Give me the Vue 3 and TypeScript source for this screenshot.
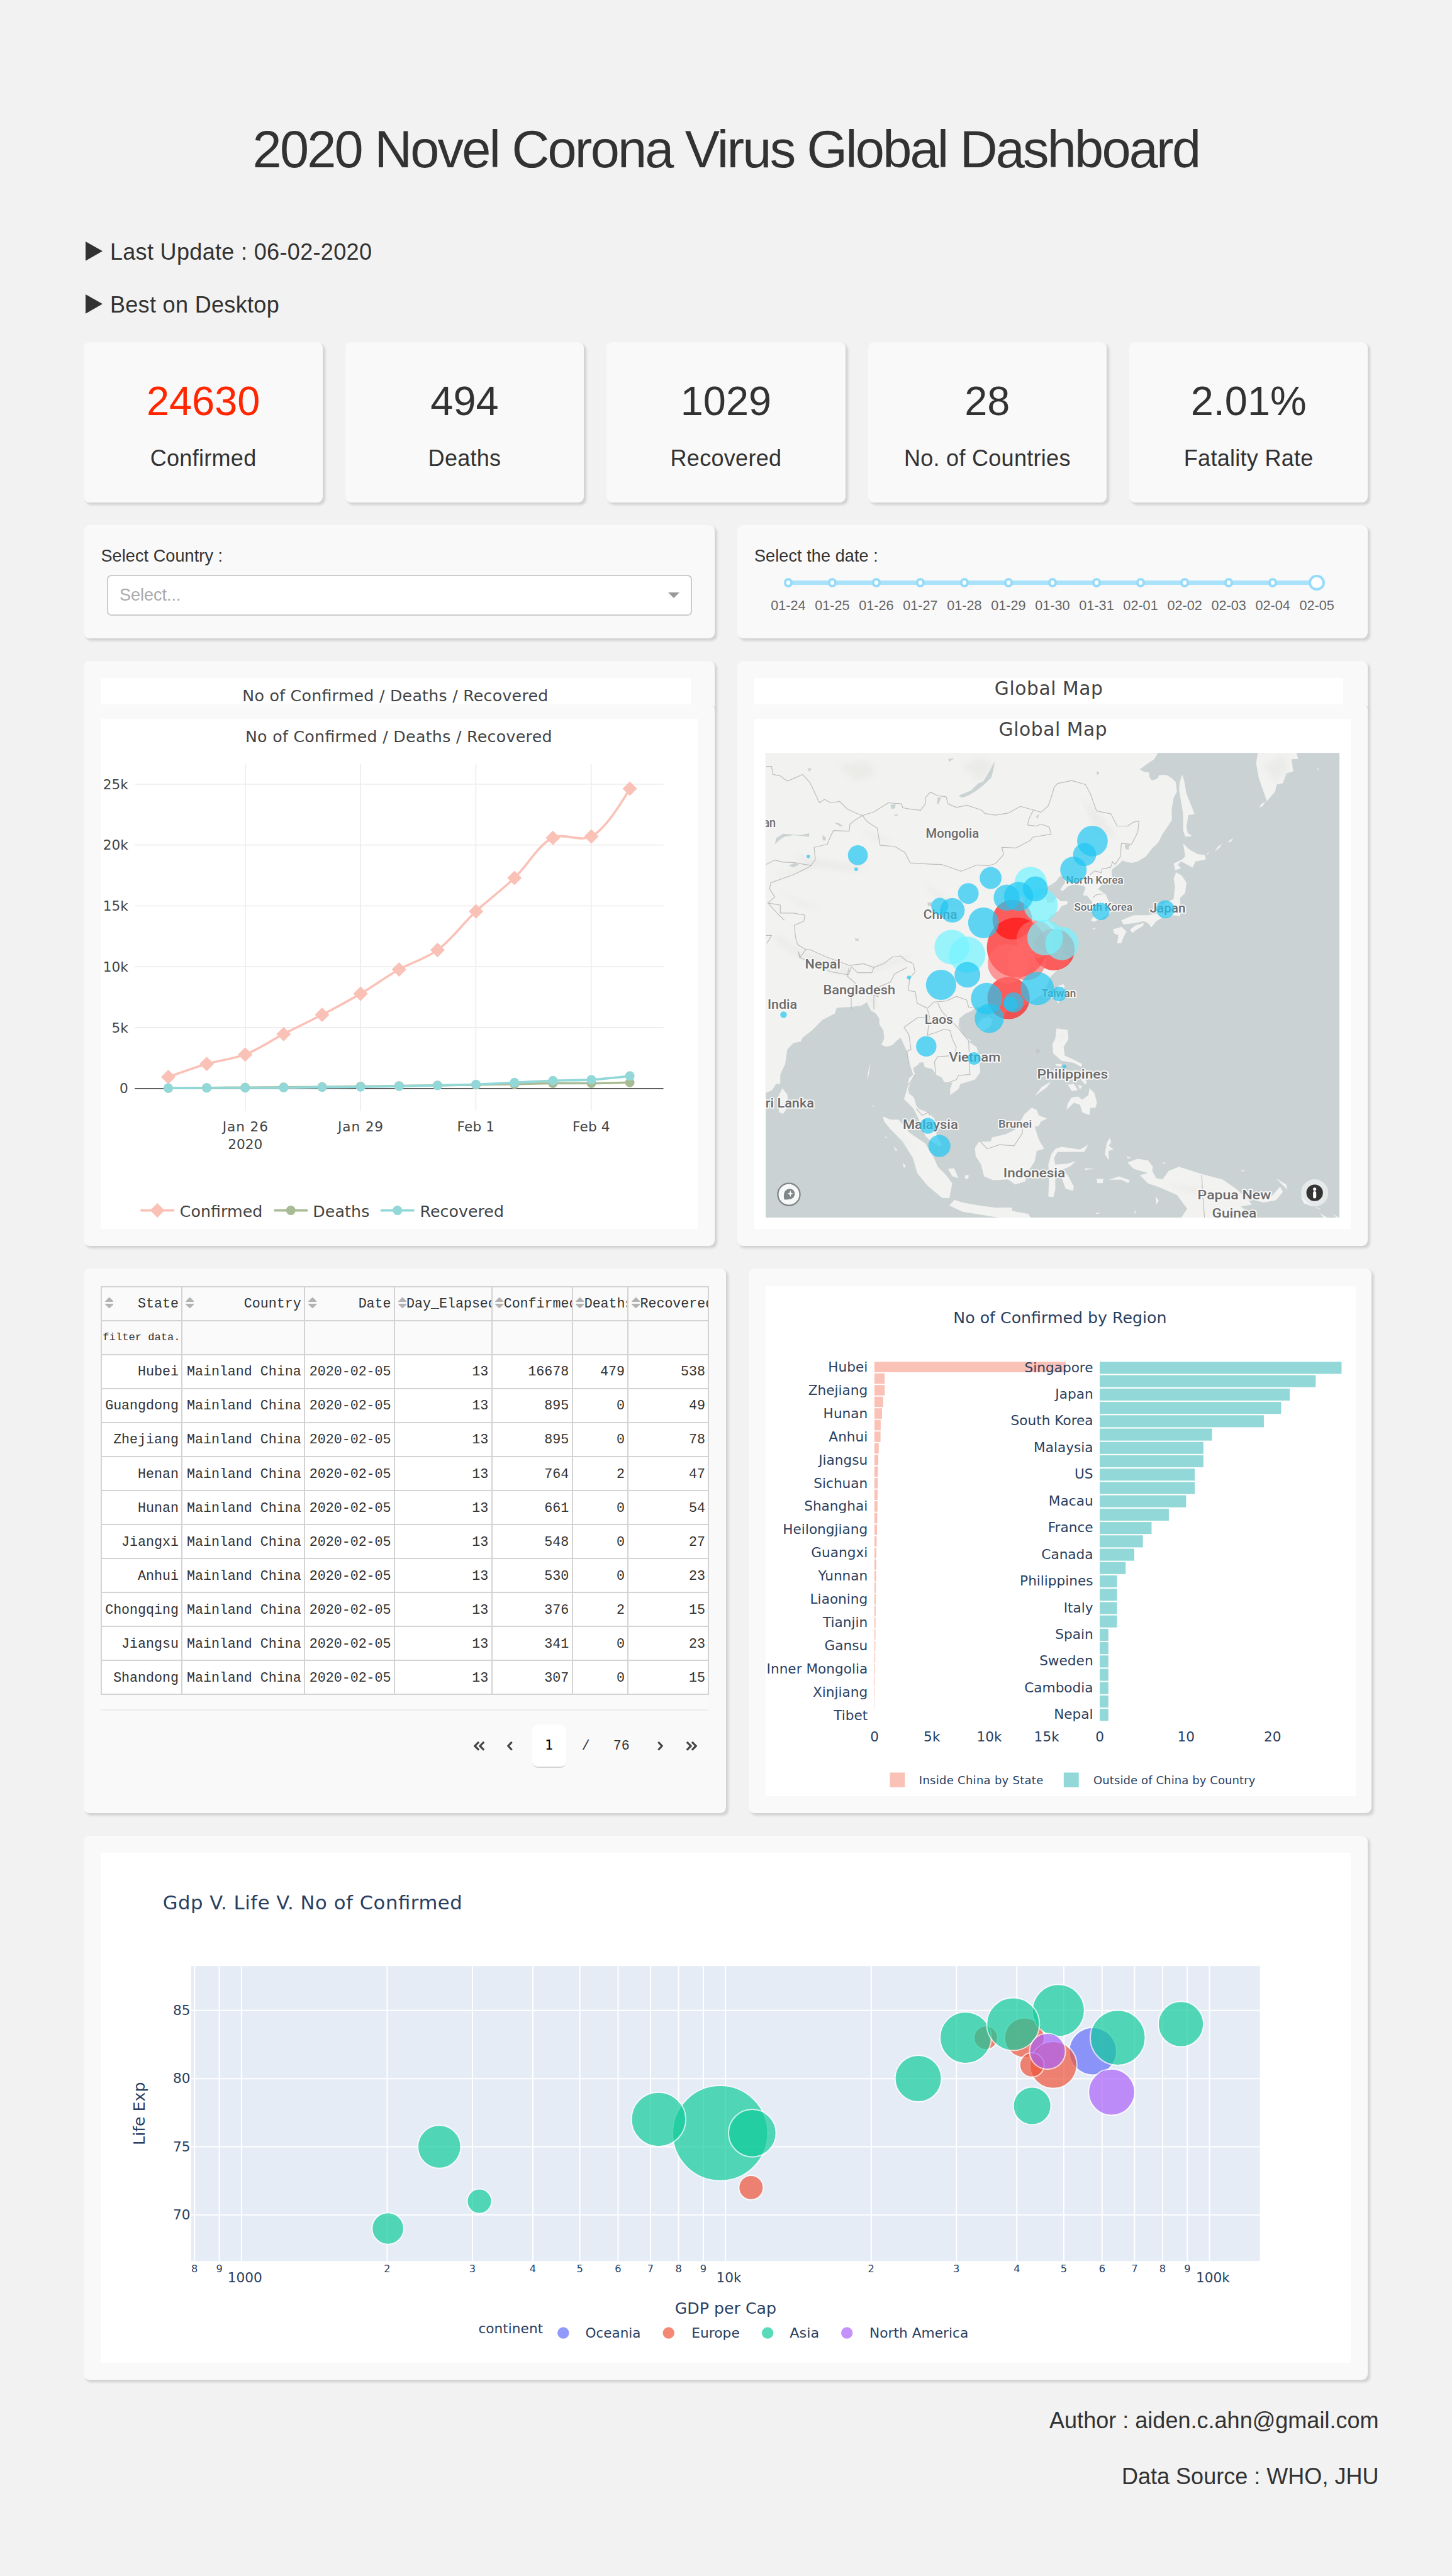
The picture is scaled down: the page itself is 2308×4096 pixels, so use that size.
<script setup lang="ts">
type Pt = [number, number]
interface Label { t: string; x: number; y: number; w: number; s?: number; a?: string }

const stats = [
  { value: '24630', label: 'Confirmed', alert: true },
  { value: '494', label: 'Deaths' },
  { value: '1029', label: 'Recovered' },
  { value: '28', label: 'No. of Countries' },
  { value: '2.01%', label: 'Fatality Rate' },
]
const dates = ['01-24', '01-25', '01-26', '01-27', '01-28', '01-29', '01-30', '01-31', '02-01', '02-02', '02-03', '02-04', '02-05']

/* ---- time series ---- */
const dayX = (i: number) => 297.2 + i * 67.82
const countY = (v: number) => 1920 - (v / 5000) * 107.36
const toPts = (v: number[]): Pt[] => v.map((n, i) => [dayX(i), countY(n)])

function tangents(p: Pt, c: Pt, n: Pt): [Pt, Pt] {
  const ax = p[0] - c[0], ay = p[1] - c[1], bx = n[0] - c[0], by = n[1] - c[1]
  const da = Math.pow(ax * ax + ay * ay, 0.25), db = Math.pow(bx * bx + by * by, 0.25)
  const nx = db * db * ax - da * da * bx, ny = db * db * ay - da * da * by
  const d1 = 3 * db * (da + db), d2 = 3 * da * (da + db)
  return [[c[0] + nx / d1, c[1] + ny / d1], [c[0] - nx / d2, c[1] - ny / d2]]
}
function spline(pts: Pt[]): string {
  const tg: [Pt, Pt][] = []
  for (let i = 1; i < pts.length - 1; i++) tg.push(tangents(pts[i - 1], pts[i], pts[i + 1]))
  let d = `M${pts[0]}Q${tg[0][0]} ${pts[1]}`
  for (let i = 2; i < pts.length - 1; i++) d += `C${tg[i - 2][1]} ${tg[i - 1][0]} ${pts[i]}`
  return d + `Q${tg[tg.length - 1][1]} ${pts[pts.length - 1]}`
}
const confirmed = toPts([941, 2019, 2794, 4473, 6057, 7783, 9776, 11374, 14549, 17295, 20588, 20704, 24630])
const deaths = toPts([26, 56, 80, 107, 132, 170, 213, 259, 305, 361, 425, 427, 494])
const recovered = toPts([36, 49, 54, 63, 110, 133, 187, 252, 340, 487, 644, 720, 1029])
const kTicks = [0, 1, 2, 3, 4, 5].map(i => ({ y: 1920 - i * 107.36, t: i ? `${i * 5}k` : '0' }))
const dayTicks = [{ x: 433, t: 'Jan 26', w: 80 }, { x: 636.2, t: 'Jan 29', w: 80 }, { x: 839.5, t: 'Feb 1', w: 66 }, { x: 1043, t: 'Feb 4', w: 66 }]
const diamond = (x: number, y: number) => `M${x - 12.8},${y}L${x},${y - 12.8}L${x + 12.8},${y}L${x},${y + 12.8}Z`

/* ---- map: outlines are traced on three sheets, each with its own origin and scale ---- */
type Sheet = 'n' | 's' | 'c'
const sheets: Record<Sheet, [number, number, number, number]> = {
  n: [1290, 1150, 0.72704, 0.357143],
  s: [1290, 1640, 0.72704, 0.3699],
  c: [1640, 1500, 1 / 3, 1 / 3],
}
function at(s: Sheet, x: number, y: number): Pt {
  const [ox, oy, kx, ky] = sheets[s]
  return [+(ox + x * kx).toFixed(1), +(oy + y * ky).toFixed(1)]
}
function trace(...parts: string[]): string {
  const out: string[] = []
  for (const part of parts) {
    const s = part[0] as Sheet
    for (const p of part.slice(2).trim().split(/\s+/)) {
      const [x, y] = p.split(',').map(Number)
      out.push(at(s, x, y).join(','))
    }
  }
  return out.join(' ')
}
const lands = [
  trace(
    'n:83,498 1034,498 1025,530 1010,550 990,580 1000,592 1012,595 1014,622 1020,635 1033,625 1037,608 1055,608 1068,625 1077,642 1080,690 1072,720 1067,780 1068,830 1055,870 1045,900 1035,940 1018,975 1005,1010 985,1035 970,1042 958,1038 948,1030 938,1050 922,1075 922,1110',
    'c:960,140 920,170 888,205 905,215 930,235 953,290 955,330 920,352 870,377 850,372 868,345 860,310 856,270 830,240 808,238 822,200 815,188 760,180 730,190 705,212 688,212 692,200 715,170 708,138 685,138 665,165 635,185 615,195 612,215 605,235 620,278 650,275 668,250 690,268 728,270 725,285 695,295 680,320 640,345 622,370 650,395 665,420 690,440 700,480 715,510 700,540 735,560 738,590 700,625 665,640 640,665 625,700 600,760 540,795 480,830 430,840 400,855 390,880 375,870 370,850 300,835 245,830 220,850 185,865 155,890 150,930 180,980 220,1010',
    's:572,530 594,560 600,600 603,680 590,715 555,735 550,760 530,788 530,760 535,730 515,725 510,705 495,690 487,665 468,655 465,632 453,635 455,640 440,660 445,690 438,720 428,755 430,780 442,800 448,840 455,855 475,870 492,900 495,950 498,990 510,1020 505,1035 485,1010 470,985 460,930 448,880 440,850 418,808 424,770 428,740 430,710 440,690 432,640 425,580 410,515 400,530 390,550 375,558 363,548 370,520 368,480 358,450 358,425 350,400 338,385 328,345 315,362 290,368 255,372 250,400 220,430 195,480 172,515 168,533 150,540 135,570 130,640 118,690 118,735 108,735 98,765 83,778',
  ),
  trace('n:1093,606 1098,640 1103,700 1115,760 1123,802 1108,805 1103,860 1106,895 1115,905 1113,912 1100,912 1095,880 1095,800 1090,740 1085,680 1087,640'),
  trace('n:1276,498 1370,498 1374,528 1358,530 1362,590 1345,600 1337,648 1322,655 1318,690 1298,738 1290,690 1278,620 1272,550'),
  trace('n:1280,768 1284,752 1295,738 1288,762'),
  trace('n:1172,985 1180,960 1190,948 1182,970'), trace('n:1152,1000 1158,985 1155,1000'), trace('n:1203,938 1217,918 1210,940'),
  trace('n:1418,568 1426,585 1420,578'),
  trace('n:1095,945 1110,975 1130,998 1148,1003 1150,1025 1125,1035 1118,1065 1090,1035 1082,1050 1090,1068 1076,1078 1072,1045 1092,1025 1100,1010'),
  trace('n:1078,1088 1092,1105 1103,1140 1100,1190 1088,1215 1088,1305 1070,1300 1060,1310 1045,1312 1030,1330 1018,1360 1010,1340 1000,1330 975,1340 950,1345 945,1325 975,1300 1010,1300 1035,1290 1050,1240 1072,1220 1075,1160 1072,1120'),
  trace('n:966,1372 980,1350 1000,1338 998,1352 980,1375 972,1388'),
  trace('n:925,1370 945,1358 958,1380 950,1410 945,1438 935,1438 938,1400 928,1390'),
  trace('n:873,1368 884,1362 880,1370'),
  trace('c:705,708 712,720 700,770 680,810 665,795 665,750 680,715'),
  trace('c:250,920 270,895 310,880 332,895 320,930 285,955 258,945'),
  trace('s:788,470 815,478 817,520 805,560 808,600 825,615 850,640 848,655 830,635 800,625 780,590 778,545 785,520'),
  trace('s:735,793 752,750 775,722 765,750'), trace('s:815,738 830,735 840,765 825,770'),
  trace('s:850,695 862,725 858,738 848,718'), trace('s:840,740 850,745 845,762'), trace('s:785,640 800,640 800,652 788,650'),
  trace('s:815,830 825,800 840,795 850,810 865,790 868,755 880,780 886,825 882,850 870,850 868,885 850,870 845,835 830,825 812,860'),
  trace('s:728,848 740,860 745,885 765,900 750,915 745,935 735,940 745,1000 758,1045 740,1055 735,1105 720,1150 712,1200 688,1215 670,1190 635,1195 612,1175 605,1120 592,1080 590,1040 600,1010 628,1010 632,990 665,975 690,950 710,880'),
  trace('s:367,890 385,905 405,905 430,965 470,1020 490,1085 500,1130 520,1170 535,1210 528,1280 510,1278 475,1220 450,1160 440,1090 415,1010 385,950 370,915'),
  trace('s:525,1140 540,1138 550,1185 535,1175'), trace('s:566,1170 575,1170 574,1187 566,1187'), trace('s:415,1110 422,1125 418,1138'),
  trace('s:392,1032 402,1050 398,1055'), trace('s:370,983 380,993 374,992'),
  trace('s:540,1288 560,1300 600,1315 640,1325 680,1325 680,1340 720,1355 725,1373 650,1373 560,1345 528,1315'),
  trace('s:785,1045 800,1035 845,1048 865,1025 855,1060 790,1060 782,1090 785,1120 815,1115 835,1103 820,1130 800,1145 815,1170 830,1225 828,1245 810,1235 800,1180 785,1165 785,1240 780,1275 768,1272 770,1180 768,1120 775,1070'),
  trace('s:918,990 920,1015 915,1030 926,1048 914,1055 915,1100 905,1070 910,1015'),
  trace('s:960,1110 985,1092 1010,1100 1022,1130 1020,1150 1030,1185 1045,1190 1060,1150 1085,1130 1140,1165 1190,1190 1220,1230 1250,1280 1262,1310 1235,1320 1270,1373 1090,1373 1105,1330 1080,1265 1040,1230 1010,1210 990,1170 1010,1160 975,1140'),
  trace('s:1270,1290 1310,1270 1330,1225 1337,1250 1320,1290 1290,1300'), trace('s:1320,1185 1345,1215 1348,1240 1340,1225'),
  trace('s:1380,1270 1395,1300 1410,1318 1388,1305'), trace('s:1415,1318 1430,1335 1420,1328'), trace('s:1426,1350 1445,1373 1436,1373'), trace('s:1455,1352 1474,1373 1468,1373'),
  trace('s:123,755 135,785 138,840 125,878 115,870 112,800'),
  trace('s:915,1192 940,1176 966,1195 962,1208 945,1192'), trace('s:885,1188 902,1188 900,1208 887,1208'),
  trace('s:1028,1272 1036,1290 1030,1312'), trace('s:975,1355 982,1332 980,1350'), trace('s:856,1138 882,1140 858,1145'),
  trace('s:958,1080 970,1088 960,1090'), trace('s:1043,1105 1055,1115 1048,1115'), trace('s:328,720 332,670 337,635 333,690'),
  trace('s:1235,1146 1246,1150 1238,1153'), trace('s:882,1352 894,1348 888,1356'), trace('s:340,838 344,838 344,845'),
]
const lakes = [
  'n:638,540 636,570 630,620 610,660 590,690 575,708 560,720 550,710 580,685 598,650 610,640 625,590',
  'n:105,950 108,920 125,898 165,905 188,896 188,914 175,910 150,905 128,912 115,930',
  'n:525,528 541,525 532,535 528,543', 'n:385,755 398,752 396,772 388,776', 'n:500,718 508,718 502,752 498,750', 'n:738,812 746,800 742,825',
  'n:248,842 260,845 271,862 262,860', 'n:138,1055 152,1043 164,1050 150,1064', 'n:475,1237 485,1235 487,1256 476,1255', 'n:953,950 966,952 962,978 955,972',
  'n:884,592 892,592 888,610', 'n:184,574 194,576 188,592', 'n:220,905 228,915 228,932 221,930', 'n:299,1415 308,1417 308,1427 300,1425', 'n:392,803 404,803 400,812',
].map(s => trace(s))
const relief = [
  'n:150,1000 240,1035 330,1060 300,1085 200,1060 110,1110 120,1090 180,1050', 'n:105,1160 170,1250 230,1275 150,1215', 'n:290,860 350,930 400,940 310,880',
  's:110,20 160,90 250,160 290,185 285,215 220,190 150,110 105,50', 's:330,180 400,140 440,120 420,150 350,195', 's:330,300 350,330 350,390 338,350',
  'n:560,560 600,520 640,560 600,640', 'n:260,560 330,540 350,600 300,640', 'n:470,1140 540,1240 530,1250 480,1180', 'n:850,720 900,820 940,930 880,870',
  's:1045,1215 1110,1225 1150,1245 1180,1270 1120,1255', 's:395,935 425,1000 450,1070 420,1010', 'n:1290,560 1340,510 1350,580 1320,640', 's:790,500 808,490 800,540',
].map(s => trace(s))
const borders = [
  ['n:83,565 97,565 100,605 118,612 135,638 150,625 172,605 190,645 213,745 225,728 240,745 262,738 280,775 300,795 317,808'],
  ['n:317,808 345,790 380,745 412,750 415,770 430,775 458,782 470,750 470,720 482,692 500,710 520,715 525,750 545,768 570,757 605,780 615,798 640,806 672,795 700,763 732,780 750,792 768,760 778,700 782,670 790,650 825,635 858,655 870,700 885,785 920,800 935,860 960,860 975,840 988,835 985,890 970,950 945,945 943,1010 930,1050', 'c:965,60 955,90 910,98 905,118 870,108 845,130'],
  ['n:317,808 330,840 353,870 360,955 395,960 420,990 433,1042 485,1048 510,1050 557,1083 595,1052 625,1055 640,1045 660,1000 655,965 690,968 725,930 730,915 775,900 770,865 750,850 740,860 718,855 720,830 732,780'],
  ['n:317,808 300,830 287,850 285,885 247,882 240,910 232,950 200,965 203,1025 190,1060 150,1100 95,1140 92,1170 105,1210 88,1240 110,1290 128,1325'],
  ['n:83,1050 105,1028 125,1038 150,1040 195,1055'],
  ['n:88,1240 118,1250 118,1290 150,1290 178,1300 175,1330 152,1350 155,1410 160,1445 180,1470', 's:190,95 230,130 285,170 320,162 345,180 370,160 390,130 410,125 425,150 440,160 445,200 432,230 428,290 445,295 450,350 475,375'],
  ['n:180,1470 165,1510', 's:162,105 168,135 210,170 240,200 283,215 290,180'], ['s:290,175 305,205 340,205 345,180'],
  ['s:285,180 280,220 300,255 290,290 300,310 290,325 290,378'], ['s:425,180 395,210 385,250 360,270 355,320 345,310 345,380'],
  ['s:475,375 490,345 520,340 545,318 570,335 575,370 585,372'], ['s:475,380 480,415 450,420 418,465 430,500 435,570 425,580 430,640'],
  ['s:480,410 475,503 495,490 515,475 530,480 535,520 545,560 540,600 500,605 492,630 495,690'],
  ['s:500,350 510,390 550,470 575,530 578,690 550,695 545,715 525,730'], ['s:445,690 430,740'], ['s:448,852 462,885 478,870 480,885'],
  ['s:602,1008 620,1045 650,1025 685,1030 705,970 705,945'], ['s:1140,1168 1143,1280 1147,1373'], ['c:860,250 880,235 918,230'],
  ['n:83,1400 97,1400 85,1440'], ['s:738,578 742,570 747,578 742,587 738,578'],
].map(a => trace(...a))

const place = (s: Sheet, t: string, x1: number, x2: number, y: number, size = 22) => {
  const a = at(s, x1, y), b = at(s, x2, y)
  return { t, x: a[0], y: a[1], w: +(b[0] - a[0]).toFixed(1), s: size }
}
const places: Label[] = [
  place('n', 'Mongolia', 471, 600, 916), place('n', 'North Korea', 811, 950, 1144, 18), place('n', 'South Korea', 831, 972, 1277, 18),
  place('n', 'China', 465, 547, 1318), place('n', 'Japan', 1014, 1101, 1288), place('n', 'an', 77, 107, 866), place('s', 'Nepal', 178, 264, 185),
  place('s', 'Bangladesh', 222, 397, 308), place('s', 'India', 87, 159, 377), place('s', 'Laos', 468, 537, 448), place('s', 'Taiwan', 752, 835, 321, 18),
  place('s', 'Vietnam', 527, 652, 629), place('s', 'Philippines', 741, 913, 711), place('s', 'Sri Lanka', 62, 200, 847), place('s', 'Malaysia', 415, 549, 948),
  place('s', 'Brunei', 647, 728, 943, 18), place('s', 'Indonesia', 659, 809, 1181), place('s', 'Papua New', 1130, 1308, 1284), place('s', 'Guinea', 1165, 1273, 1372),
]
const group = (fill: string, s: Sheet, k: number, list: number[][]) =>
  list.map(([x, y, r]) => { const p = at(s, x, y); return { x: p[0], y: p[1], r: r * k, fill } })
const RED = 'rgba(255,12,12,.65)', ROSE = 'rgba(255,105,105,.65)', AQUA = 'rgba(115,244,255,.7)', BLUE = 'rgba(32,198,242,.7)'
const cases = [
  ...group(RED, 'c', 1 / 3, [[435, 367, 105], [458, 514, 158], [655, 525, 110], [415, 781, 112]]),
  ...group(ROSE, 'c', 1 / 3, [[557, 470, 100], [410, 600, 105], [510, 586, 101]]),
  ...group(AQUA, 'c', 1 / 3, [[532, 172, 85], [585, 290, 90], [608, 462, 94], [697, 493, 88], [115, 512, 92], [196, 552, 96]]),
  ...group(BLUE, 'c', 1 / 3, [[320, 146, 58], [202, 228, 55], [51, 296, 45], [118, 317, 65], [282, 383, 81], [405, 250, 69], [468, 244, 77], [557, 204, 66], [758, 103, 70], [903, 323, 46], [197, 658, 68], [58, 712, 80], [299, 784, 83], [313, 889, 77], [567, 731, 88], [442, 805, 53], [426, 813, 37], [682, 760, 39]]),
  ...group(BLUE, 'n', 1, [[875, 934, 27], [856, 1001, 20.3], [306, 1004, 17.5], [186, 1010, 3], [302, 1073, 3.2], [1052, 1271, 16]]),
  ...group(BLUE, 's', 1, [[430, 228, 3.5], [126, 405, 5.8], [472, 556, 18], [588, 614, 11.3], [807, 652, 3.5], [476, 935, 14], [504, 1031, 19.5]]),
]

/* ---- data table ---- */
const columns = ['State', 'Country', 'Date', 'Day_Elapsed', 'Confirmed', 'Deaths', 'Recovered']
const widths = [142, 216, 158.5, 171.5, 142, 98.5, 142]
const rows = ([
  ['Hubei', 16678, 479, 538], ['Guangdong', 895, 0, 49], ['Zhejiang', 895, 0, 78], ['Henan', 764, 2, 47], ['Hunan', 661, 0, 54],
  ['Jiangxi', 548, 0, 27], ['Anhui', 530, 0, 23], ['Chongqing', 376, 2, 15], ['Jiangsu', 341, 0, 23], ['Shandong', 307, 0, 15],
] as [string, number, number, number][]).map(([s, c, d, r]) => [s, 'Mainland China', '2020-02-05', 13, c, d, r])

/* ---- bars by region ---- */
const states = ['Hubei', 'Zhejiang', 'Hunan', 'Anhui', 'Jiangsu', 'Sichuan', 'Shanghai', 'Heilongjiang', 'Guangxi', 'Yunnan', 'Liaoning', 'Tianjin', 'Gansu', 'Inner Mongolia', 'Xinjiang', 'Tibet']
const stateValues = [16678, 895, 895, 764, 661, 548, 530, 376, 341, 307, 301, 274, 270, 244, 227, 195, 168, 165, 150, 128, 124, 111, 100, 89, 81, 69, 62, 55, 40, 25, 5]
const countries = ['Singapore', 'Japan', 'South Korea', 'Malaysia', 'US', 'Macau', 'France', 'Canada', 'Philippines', 'Italy', 'Spain', 'Sweden', 'Cambodia', 'Nepal']
const countryValues = [28, 25, 22, 21, 19, 13, 12, 12, 11, 11, 10, 8, 6, 5, 4, 3, 2, 2, 2, 2, 1, 1, 1, 1, 1, 1, 1]
const sPitch = 635.6 / 31, cPitch = 635.6 / 27

/* ---- bubble chart ---- */
const gdpX = (v: number) => 426.3 + Math.log10(v / 1000) * 853.4
const gdpTicks: { x: number; t: string }[] = []
for (const base of [100, 1000, 10000]) for (let k = 2; k <= 9; k++) if (base * k >= 800) gdpTicks.push({ x: gdpX(base * k), t: String(k) })
const decades = [{ x: 426.3, t: '1000' }, { x: 1279.7, t: '10k' }, { x: 2133.1, t: '100k' }]
const lifeTicks = [85, 80, 75, 70].map((t, i) => ({ t, y: 3546.2 + i * 120.2 }))
const bubbles = [
  { fill: '#636efa', pts: [[1927.4, 3618, 42]] },
  { fill: '#ef553b', pts: [[1738.7, 3594.2, 21], [1806.8, 3594.2, 35], [1857.8, 3642.3, 41.5], [1820, 3642.3, 21.5], [1324.8, 3858.6, 21.6]] },
  { fill: '#12cc9c', pts: [[1270.4, 3762.5, 84], [775.1, 3786.5, 38], [845.8, 3882.6, 21.7], [684.5, 3930.7, 28], [1161.7, 3738.3, 48], [1327, 3762.5, 42], [1619.6, 3666.2, 41], [1703.2, 3594.2, 45.4], [1866.7, 3546.2, 46], [1786.8, 3570.2, 46.6], [1971.4, 3594.2, 48.6], [2082.7, 3570.2, 40], [1820.4, 3714.4, 33.3]] },
  { fill: '#ab63fa', pts: [[1847.5, 3618.2, 31.7], [1960.6, 3690.2, 40.8]] },
]
const continents = [
  { t: 'Oceania', dot: 993.7, x: 1033.7, w: 95.5, fill: '#636efa' }, { t: 'Europe', dot: 1179.4, x: 1220.8, w: 83, fill: '#ef553b' },
  { t: 'Asia', dot: 1354, x: 1394, w: 50, fill: '#12cc9c' }, { t: 'North America', dot: 1493.8, x: 1534.5, w: 172.5, fill: '#ab63fa' },
]
</script>

<template>
  <div class="page">
    <h1 class="title">2020 Novel Corona Virus Global Dashboard</h1>
    <div class="notes">
      <div v-for="n in ['Last Update : 06-02-2020', 'Best on Desktop']" :key="n" class="note">
        <svg width="30" height="34" viewBox="0 0 30 34"><path d="M0 0L30 17L0 34Z" fill="#323232" /></svg><span>{{ n }}</span>
      </div>
    </div>

    <section class="row stats">
      <div v-for="s in stats" :key="s.label" class="card stat">
        <div class="num" :class="{ alert: s.alert }">{{ s.value }}</div>
        <div class="cap">{{ s.label }}</div>
      </div>
    </section>

    <section class="row">
      <div class="card filter">
        <label>Select Country :</label>
        <div class="select"><span>Select...</span><i></i></div>
      </div>
      <div class="card filter">
        <label>Select the date :</label>
        <div class="slider">
          <div v-for="(d, i) in dates" :key="d" class="step">
            <div class="mark"><b :class="{ handle: i === dates.length - 1 }"></b></div>
            <span>{{ d }}</span>
          </div>
        </div>
      </div>
    </section>

    <section class="row">
      <div class="stack">
        <div class="card tab">
          <svg width="1040" height="46" viewBox="178 1196 1040 46" class="white">
            <text x="428" y="1236.5" font-size="28" textLength="539" fill="#444">No of Confirmed / Deaths / Recovered</text>
          </svg>
        </div>
        <div class="card body">
          <svg width="1052" height="900" viewBox="178 1268 1052 900" class="white" fill="#444">
            <text x="433" y="1309" font-size="28" textLength="541">No of Confirmed / Deaths / Recovered</text>
            <g stroke="#eee" stroke-width="2">
              <line v-for="k in kTicks.slice(1)" :key="k.t" x1="238" x2="1170.3" :y1="k.y" :y2="k.y" />
              <line v-for="d in dayTicks" :key="d.t" :x1="d.x" :x2="d.x" y1="1348" y2="1959.5" />
            </g>
            <line x1="238" x2="1170.3" y1="1920" y2="1920" stroke="#444" stroke-width="1.6" />
            <text v-for="k in kTicks" :key="k.t" x="226.5" :y="k.y + 8.5" font-size="24" text-anchor="end">{{ k.t }}</text>
            <text v-for="d in dayTicks" :key="d.t" :x="d.x - d.w / 2" y="1995.5" font-size="24" :textLength="d.w">{{ d.t }}</text>
            <text x="433" y="2027" font-size="24" text-anchor="middle">2020</text>
            <g fill="none" stroke-width="4">
              <path :d="spline(confirmed)" stroke="#fac1b7" /><path :d="spline(deaths)" stroke="#a9bb95" /><path :d="spline(recovered)" stroke="#92d8d8" />
            </g>
            <path v-for="(p, i) in confirmed" :key="i" :d="diamond(p[0], p[1])" fill="#fac1b7" />
            <circle v-for="(p, i) in deaths" :key="i" :cx="p[0]" :cy="p[1]" r="8.3" fill="#a9bb95" />
            <circle v-for="(p, i) in recovered" :key="i" :cx="p[0]" :cy="p[1]" r="8.3" fill="#92d8d8" />
            <g stroke-width="4">
              <line x1="248.3" x2="308" y1="2135" y2="2135" stroke="#fac1b7" /><line x1="484" x2="543" y1="2135" y2="2135" stroke="#a9bb95" /><line x1="671.5" x2="731" y1="2135" y2="2135" stroke="#92d8d8" />
            </g>
            <path :d="diamond(278, 2135)" fill="#fac1b7" /><circle cx="513.3" cy="2135" r="8.3" fill="#a9bb95" /><circle cx="701.3" cy="2135" r="8.3" fill="#92d8d8" />
            <g font-size="28">
              <text x="317.5" y="2146" textLength="146">Confirmed</text><text x="552" y="2146" textLength="100">Deaths</text><text x="741" y="2146" textLength="148">Recovered</text>
            </g>
          </svg>
        </div>
      </div>

      <div class="stack">
        <div class="card tab">
          <svg width="1038" height="46" viewBox="1330 1196 1038 46" class="white">
            <text x="1753.5" y="1226" font-size="33" textLength="191" fill="#444">Global Map</text>
          </svg>
        </div>
        <div class="card body">
          <svg width="1052" height="900" viewBox="1330 1268 1052 900" class="white">
            <text x="1761" y="1297.5" font-size="33" textLength="191" fill="#444">Global Map</text>
            <svg x="1350" y="1328" width="1012" height="820" viewBox="1350 1328 1012 820">
              <defs>
                <filter id="soft" x="-20%" y="-20%" width="140%" height="140%"><feGaussianBlur stdDeviation="5" /></filter>
              </defs>
              <rect x="1350" y="1328" width="1012" height="820" fill="#cad2d3" />
              <polygon v-for="(p, i) in lands" :key="i" :points="p" fill="#f2f2f0" />
              <g fill="#e9e9e7" filter="url(#soft)" opacity=".8"><polygon v-for="(p, i) in relief" :key="i" :points="p" /></g>
              <polygon v-for="(p, i) in lakes" :key="i" :points="p" fill="#cad2d3" />
              <polyline v-for="(p, i) in borders" :key="i" :points="p" fill="none" stroke="#bdbdbd" stroke-width="1.3" stroke-linejoin="round" />
              <g class="places">
                <text v-for="p in places" :key="p.t" :x="p.x" :y="p.y" :font-size="p.s" :textLength="p.w" lengthAdjust="spacingAndGlyphs">{{ p.t }}</text>
              </g>
              <circle v-for="(c, i) in cases" :key="i" :cx="c.x" :cy="c.y" :r="c.r" :fill="c.fill" />
              <g transform="translate(1391 2106.8)">
                <circle r="19.5" fill="#f8f9f9" stroke="#7f8788" stroke-width="2.6" />
                <path d="M-8.5 9C-9.5 2-9 -3-6 -6.5C-1 -12 7 -10.5 9.500 -5C12 1 8.500 7 2 8.500C-2 9.300-6 9.300-8.500 9Z" fill="#7f8788" />
                <path d="M2.500 -7L4 -2.800L8 -1.300L4 .2L2.500 4.400L1 .2L-3 -1.300L1 -2.800Z" fill="#f8f9f9" />
              </g>
              <g transform="translate(2318 2104)">
                <circle r="24" fill="#fff" fill-opacity=".5" /><circle r="14.6" fill="#333" />
                <circle cy="-6.500" r="2.900" fill="#fff" /><path d="M-2.800 0A2.800 2.800 0 0 1 2.800 0V7A2.800 2.800 0 0 1 -2.800 7Z" fill="#fff" />
              </g>
            </svg>
          </svg>
        </div>
      </div>
    </section>

    <section class="row regional">
      <div class="card sheet">
        <table>
          <colgroup><col v-for="(w, i) in widths" :key="i" :style="{ width: w + 'px' }" /></colgroup>
          <thead>
            <tr>
              <th v-for="c in columns" :key="c">
                <div class="head"><svg width="15" height="19" viewBox="0 0 15 19"><path d="M0 7.800Q0 7 .6 6.300L6.300 .6Q7.500 -.4 8.700 .6L14.400 6.300Q15 7 15 7.800ZM0 11.200Q0 12 .6 12.700L6.300 18.400Q7.500 19.400 8.700 18.400L14.400 12.700Q15 12 15 11.200Z" fill="#b3b3b3" /></svg><span>{{ c }}</span></div>
              </th>
            </tr>
            <tr class="hint"><th v-for="(c, i) in columns" :key="c"><div>{{ i ? '' : 'filter data...' }}</div></th></tr>
          </thead>
          <tbody>
            <tr v-for="r in rows" :key="r[0]"><td v-for="(v, i) in r" :key="i">{{ v }}</td></tr>
          </tbody>
        </table>
        <div class="strip"></div>
        <div class="pager">
          <svg width="20" height="16" viewBox="0 0 20 16"><path d="M9 1L2 8L9 15M18 1L11 8L18 15" /></svg>
          <svg width="10" height="16" viewBox="0 0 10 16" class="prev"><path d="M8.500 1L2 8L8.500 15" /></svg>
          <span class="current">1</span><span class="slash">/</span><span class="total">76</span>
          <svg width="10" height="16" viewBox="0 0 10 16" class="next"><path d="M1.500 1L8 8L1.500 15" /></svg>
          <svg width="20" height="16" viewBox="0 0 20 16" class="last"><path d="M2 1L9 8L2 15M11 1L18 8L11 15" /></svg>
        </div>
      </div>

      <div class="card bars">
        <svg width="1040" height="900" viewBox="1350 2268 1040 900" class="white" fill="#2a3f5f">
          <text x="1869" y="2334" font-size="28" text-anchor="middle">No of Confirmed by Region</text>
          <rect v-for="(v, i) in stateValues" :key="'s' + i" x="1541.8" :y="2400.4 + sPitch * (i + 0.05)" :width="v * 0.02023" :height="sPitch * 0.9" fill="#fac1b7" />
          <rect v-for="(v, i) in countryValues" :key="'c' + i" x="1939.1" :y="2400.4 + cPitch * (i + 0.05)" :width="v * 15.23" :height="cPitch * 0.9" fill="#92d8d8" />
          <g font-size="24">
            <text v-for="(s, i) in states" :key="s" x="1530" :y="2418.500 + sPitch * 2 * i" text-anchor="end">{{ s }}</text>
            <text v-for="(s, i) in countries" :key="s" x="1927.500" :y="2419.500 + cPitch * 2 * i" text-anchor="end">{{ s }}</text>
            <g text-anchor="middle">
              <text v-for="(t, i) in ['0', '5k', '10k', '15k']" :key="t" :x="1542 + i * 101.15" y="3071.5">{{ t }}</text>
              <text v-for="(t, i) in ['0', '10', '20']" :key="t" :x="1939.1 + i * 152.3" y="3071.5">{{ t }}</text>
            </g>
          </g>
          <rect x="1569" y="3126" width="26.5" height="26" fill="#fac1b7" /><rect x="1875.600" y="3126" width="26.5" height="26" fill="#92d8d8" />
          <text x="1620.500" y="3147" font-size="20" textLength="219">Inside China by State</text>
          <text x="1928" y="3147" font-size="20" textLength="285.5">Outside of China by Country</text>
        </svg>
      </div>
    </section>

    <section class="card wide">
      <svg width="2204" height="900" viewBox="178 3268 2204 900" class="white" fill="#2a3f5f">
        <text x="287.500" y="3368" font-size="34" textLength="528">Gdp V. Life V. No of Confirmed</text>
        <rect x="337.500" y="3468" width="1884.5" height="520" fill="#e5ecf6" />
        <g stroke="#fff" stroke-width="2.2">
          <line v-for="l in lifeTicks" :key="l.t" x1="337.500" x2="2222" :y1="l.y" :y2="l.y" />
          <line v-for="(g, i) in [...gdpTicks, ...decades]" :key="i" :x1="g.x" :x2="g.x" y1="3468" y2="3988" />
        </g>
        <text v-for="l in lifeTicks" :key="l.t" x="336" :y="l.y + 8" font-size="24" text-anchor="end">{{ l.t }}</text>
        <text v-for="(g, i) in gdpTicks" :key="i" :x="g.x" y="4007.500" font-size="18" text-anchor="middle">{{ g.t }}</text>
        <text v-for="d in decades" :key="d.t" :x="d.x + 6" y="4026" font-size="24" text-anchor="middle">{{ d.t }}</text>
        <text transform="translate(256 3728) rotate(-90)" font-size="28" text-anchor="middle">Life Exp</text>
        <text x="1280" y="4081" font-size="28" text-anchor="middle">GDP per Cap</text>
        <template v-for="b in bubbles" :key="b.fill">
          <circle v-for="(p, i) in b.pts" :key="i" :cx="p[0]" :cy="p[1]" :r="p[2]" :fill="b.fill" stroke="#fff" stroke-width="2.2" opacity=".7" />
        </template>
        <text x="844" y="4116" font-size="24" textLength="114">continent</text>
        <template v-for="c in continents" :key="c.t">
          <circle :cx="c.dot" cy="4115" r="10.2" :fill="c.fill" opacity=".7" />
          <text :x="c.x - 1" y="4123" font-size="24" :textLength="c.w + 2" lengthAdjust="spacingAndGlyphs">{{ c.t }}</text>
        </template>
      </svg>
    </section>

    <footer>
      <div>Author : aiden.c.ahn@gmail.com</div>
      <div>Data Source : WHO, JHU</div>
    </footer>
  </div>
</template>

<style>
html, body { background: #f2f2f2; overflow: hidden; }
</style>

<style scoped>
.page { zoom: 0.9015; box-sizing: border-box; width: 2560px; height: 4544px; padding: 208px 148px 0; background: #f2f2f2; color: #323232; font-family: "Liberation Sans", Arial, sans-serif; }
.title { margin: 0; font-size: 92px; line-height: 110px; font-weight: 400; letter-spacing: -3.1px; text-align: center; white-space: nowrap; }
.notes { margin-top: 97px; margin-bottom: 36px; display: flex; flex-direction: column; gap: 33px; }
.note { display: flex; align-items: center; gap: 13px; padding-left: 3px; font-size: 40px; line-height: 60px; letter-spacing: 0.35px; }
.note svg { margin-top: -4px; }
.row { display: flex; gap: 40px; margin-bottom: 40px; }
.card { box-sizing: border-box; background: #f9f9f9; border-radius: 10px; box-shadow: 4px 4px 4px lightgrey; }
.stat { flex: 1; height: 282px; padding-top: 60px; text-align: center; }
.num { font-size: 72px; line-height: 86px; }
.num.alert { color: #ff2600; }
.cap { margin-top: 29px; font-size: 40px; line-height: 60px; letter-spacing: 0.3px; }
.filter { flex: 1; height: 200px; padding: 32px 30px 0; }
.filter label { display: block; font-size: 30px; line-height: 45px; letter-spacing: 0.1px; }
.select { box-sizing: border-box; display: flex; align-items: center; justify-content: space-between; height: 72px; margin: 11px 10px 0 10.500px; padding: 0 20px; border: 2.300px solid #ccc; border-radius: 8px; background: #fff; color: #aaa; font-size: 30px; }
.select i { border: 10px solid transparent; border-top-color: #999; border-bottom: 0; }
.slider { position: relative; display: flex; width: 1009.6px; margin: 11px 0 0 21px; }
.slider::before { content: ""; position: absolute; left: 38.8px; right: 38.8px; top: 10px; height: 8px; background: #abe2fb; border-radius: 4px; }
.step { position: relative; flex: 1; text-align: center; font-size: 24px; line-height: 36px; color: #666; }
.mark { display: flex; align-items: center; justify-content: center; height: 28px; margin-bottom: 8px; }
.mark b { box-sizing: border-box; width: 16px; height: 16px; border: 4.500px solid #96dbfa; border-radius: 50%; background: #fff; }
.mark b.handle { width: 28px; height: 28px; }
.stack { flex: 1; }
.tab { height: 90px; padding: 30px 0 0 30px; }
.tab svg { display: block; }
.body { position: relative; height: 956px; margin-top: -14px; padding: 26px 0 0 30px; }
svg.white { display: block; background: #fff; }
svg text { font-family: "DejaVu Sans", Verdana, sans-serif; }
.places text { font-family: Roboto, "Open Sans", sans-serif; font-weight: 500; fill: #6b6b6b; stroke: #f8f8f8; stroke-width: 4px; stroke-linejoin: round; paint-order: stroke; }
.regional { gap: 40px; }
.sheet { width: 1132px; height: 960px; padding: 30px; }
.bars { width: 1098px; height: 960px; padding: 30px; }
table { width: 1071px; table-layout: fixed; border-collapse: collapse; font: 24px/34px "Liberation Mono", "Courier New", monospace; background: #fff; }
th, td { box-sizing: border-box; height: 60px; padding: 2px 5px 0; border: 2.300px solid #d3d3d3; overflow: hidden; white-space: nowrap; text-align: right; font-weight: 400; }
th { padding-right: 0; padding-left: 5px; background: #fafafa; }
.head { display: flex; align-items: center; overflow: hidden; }
.head svg { flex: none; display: block; margin-top: -5px; }
.head span { margin-left: auto; padding-right: 5px; }
.hint th { padding-left: 1px; font-size: 19px; }
.hint div { width: 140px; overflow: hidden; text-align: left; }
.strip { width: 1071px; height: 27px; box-sizing: border-box; border-bottom: 2.300px solid #ececec; background: #fafafa; }
.pager { display: flex; align-items: center; height: 76px; margin-top: 25px; padding-left: 657px; font: 24px/34px "Liberation Mono", monospace; }
.pager svg { fill: none; stroke: #444; stroke-width: 3.500; }
.prev { margin-left: 39px; }
.current { box-sizing: border-box; width: 60px; height: 76px; margin-left: 34px; border-radius: 10px; border-bottom: 2.300px solid #d3d3d3; background: #fff; color: #000; font-family: "DejaVu Sans Mono", monospace; line-height: 74px; text-align: center; }
.slash { margin-left: 28px; }
.total { margin-left: 41px; }
.next { margin-left: 49px; }
.last { margin-left: 40px; }
.wide { height: 960px; padding: 30px; }
footer { margin-top: 42px; margin-right: -19px; text-align: right; font-size: 40px; line-height: 60px; display: flex; flex-direction: column; gap: 38px; }
</style>
